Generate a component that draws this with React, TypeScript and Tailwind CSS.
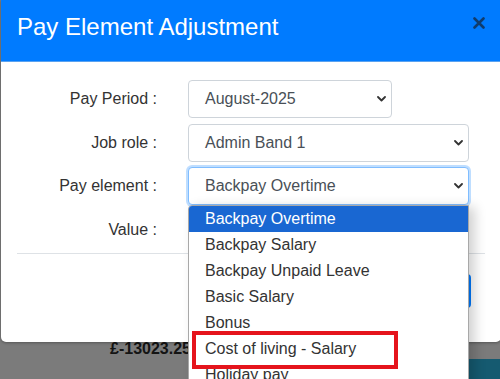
import React from 'react';

// Chevron used by the native-looking selects
const Chevron = () => (
  <svg width="9" height="6" viewBox="0 0 9 6" className="shrink-0">
    <path d="M1 1l3.5 3.5L8 1" fill="none" stroke="#333" strokeWidth="1.8" strokeLinecap="round" strokeLinejoin="round" />
  </svg>
);

interface SelectProps {
  value: string;
  width: string;
  focused?: boolean;
}

const FakeSelect: React.FC<SelectProps> = ({ value, width, focused }) => (
  <div
    className={`${width} h-[38px] flex items-center justify-between pl-[16px] pr-[5px] bg-white rounded-[4px] border ${
      focused ? 'border-[#80bdff] shadow-[0_0_0_2px_rgba(0,123,255,0.25)]' : 'border-[#ced4da]'
    }`}
  >
    <span className="text-[16px] text-[#495057]">{value}</span>
    <Chevron />
  </div>
);

const FormRow = ({ label, children }: { label: string; children?: React.ReactNode }) => (
  <div className="flex items-center h-[38px]">
    <div className="w-[156px] text-right text-[16px] text-[#333]">{label}</div>
    <div className="ml-[31px]">{children}</div>
  </div>
);

const options = [
  'Backpay Overtime',
  'Backpay Salary',
  'Backpay Unpaid Leave',
  'Basic Salary',
  'Bonus',
  'Cost of living - Salary',
  'Holiday pay',
];

const App = () => {
  return (
    <div className="relative w-[500px] h-[379px] overflow-hidden bg-[#7b7b7b] font-['Liberation_Sans',Arial,sans-serif]">
      {/* page behind the overlay */}
      <div className="h-full flex flex-col justify-end">
        <div className="h-[39px] flex justify-between items-start">
          <span className="ml-[110px] text-[16px] leading-[18px] font-bold text-[#141414]">£-13023.25</span>
          <div className="mt-[19px] w-[31px] h-[20px] bg-[#155a70]" />
        </div>
      </div>

      {/* modal */}
      <div className="absolute left-px top-0 w-[500px] h-[342px] bg-white rounded-b-[5px] flex flex-col shadow-[0_1px_3px_rgba(0,0,0,0.3)]">
        <div className="h-[62px] bg-[#007bff] flex justify-between pl-[16px] pr-[16px] border-b border-[#5aa2f0]">
          <h1 className="pt-[13px] text-[24px] leading-[28px] text-white">Pay Element Adjustment</h1>
          <svg width="12" height="12" viewBox="0 0 12 12" className="mt-[17px]">
            <path d="M1.5 1.5l9 9M10.5 1.5l-9 9" stroke="#0f3c6e" strokeWidth="2.6" strokeLinecap="round" />
          </svg>
        </div>

        <div className="h-[191px] pt-[18px] flex flex-col gap-[5.5px]">
          <FormRow label="Pay Period :">
            <FakeSelect value="August-2025" width="w-[204px]" />
          </FormRow>
          <FormRow label="Job role :">
            <FakeSelect value="Admin Band 1" width="w-[281px]" />
          </FormRow>
          <FormRow label="Pay element :">
            <FakeSelect value="Backpay Overtime" width="w-[281px]" focused />
          </FormRow>
          <FormRow label="Value :" />
        </div>

        <div className="mx-[16px] border-t border-[#dee2e6] flex justify-end pr-[14px] pt-[20px]">
          <div className="w-[90px] h-[34px] bg-[#007bff] rounded-[4px]" />
        </div>
      </div>

      {/* open dropdown list */}
      <div className="absolute left-[188px] top-[205px] w-[281px] h-[200px] bg-white border border-[#a8a8a8] rounded-tl-[4px] shadow-[6px_2px_12px_rgba(0,0,0,0.18)]">
        {options.map((opt, i) => (
          <div
            key={opt}
            className={`h-[26px] flex items-center pl-[16px] text-[16px] ${
              i === 0 ? 'bg-[#1967d2] text-white rounded-tl-[3px]' : 'text-[#333]'
            }`}
          >
            {opt}
          </div>
        ))}
        <div className="absolute left-[3px] top-[125px] w-[206px] h-[38px] border-4 border-[#e5141c]" />
      </div>
    </div>
  );
};

export default App;
